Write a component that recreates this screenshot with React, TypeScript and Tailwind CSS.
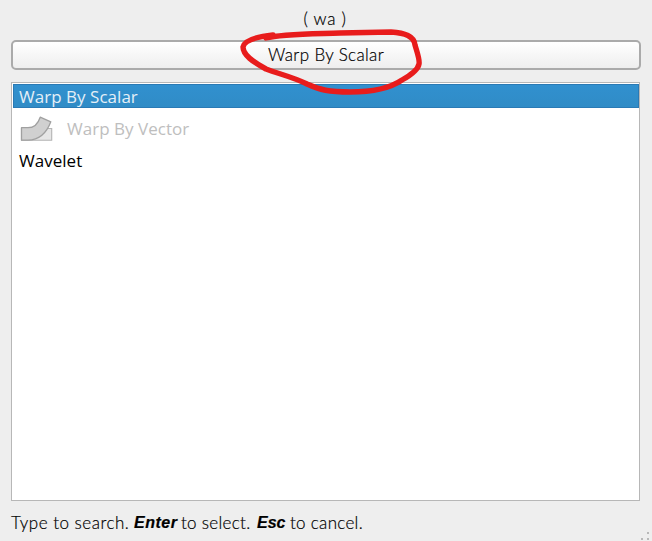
function WarpIcon() {
  return (
    <svg width="34" height="26" viewBox="0 0 34 26" className="block shrink-0">
      <path d="M1.5 13.5H31.7V25.300H1.5Z" fill="#e6e6e6" stroke="#b4b4b4" strokeWidth="1.1" />
      <path d="M1.5 12.7H8C14 12.700 18.300 8 20.200 2.200L30.800 6.800C26.500 18.200 18.500 25 8 25.200H1.500Z" fill="#d0d0d0" stroke="#a0a0a0" strokeWidth="1.3" strokeLinejoin="round" />
    </svg>
  );
}

function Scribble() {
  return (
    <svg width="190" height="75" viewBox="235 25 190 75" className="pointer-events-none absolute left-[235px] top-[25px]">
      <path
        d="M266 38C280 34 310 34 340 33L391 32C405 33 414 36 415 45C417 52 420 60 419 64C418 70 411 75 402 80C389 89 371 92 350 92C329 92 320 90 307 84C293 77 279 74 266 69C253 62 243 55 243 47C244 41 254 37 273 35"
        fill="none" stroke="#e81c1c" strokeWidth="5.400" strokeLinecap="round" strokeLinejoin="round"
      />
    </svg>
  );
}

export default function App() {
  return (
    <div className="relative flex h-[541px] w-[652px] flex-col overflow-hidden bg-[#eeeeee] pl-[11px] font-['Lato',sans-serif] text-[17px] font-light text-black">
      <div className="flex h-10 w-[629px] items-center justify-center whitespace-pre pb-[3px] pr-[1px]">
        <span className="leading-5 tracking-[0.700px] [-webkit-text-stroke:0.2px_black]">( wa )</span>
      </div>
      <button className="flex h-[30px] w-[630px] shrink-0 items-center justify-center rounded-[5px] border-2 border-[#aaaaaa] bg-linear-to-b from-white to-[#eeeeee] pb-px tracking-[0.350px] [-webkit-text-stroke:0.2px_black]">
        Warp By Scalar
      </button>
      <div className="mt-3 flex h-[419px] w-[629px] shrink-0 flex-col border border-[#b7b7b7] bg-white pl-px pt-px font-['Open_Sans',sans-serif] text-[17px] font-normal">
        <div className="flex h-6 shrink-0 items-center border border-[#2a7ab5] bg-linear-to-b from-[#3190cf] to-[#308cc6] pl-[5px] text-[#e5eff7]">
          <span className="pt-0.5 tracking-[0.030px]">Warp By Scalar</span>
        </div>
        <div className="flex h-10 shrink-0 items-center pl-[7px] text-[#bebebe]">
          <WarpIcon />
          <span className="ml-[13px] pt-0.5 tracking-[0.030px]">Warp By Vector</span>
        </div>
        <div className="flex h-6 shrink-0 items-center pl-1.5">
          <span className="pt-0.5 tracking-[0.030px]">Wavelet</span>
        </div>
      </div>
      <div className="flex h-[40px] items-center whitespace-nowrap pt-1 leading-5 [-webkit-text-stroke:0.2px_black]">
        <span className="w-[123px] tracking-[0.500px]">Type to search.</span>
        <span className="w-[47px] font-['Liberation_Sans',sans-serif] text-[16px] font-bold italic tracking-[0.500px]">Enter</span>
        <span className="w-[76px] tracking-[0.300px]">to select.</span>
        <span className="w-[33px] font-['Liberation_Sans',sans-serif] text-[16px] font-bold italic">Esc</span>
        <span className="tracking-[0.300px]">to cancel.</span>
      </div>
      <svg width="12" height="11" viewBox="0 0 12 11" className="absolute bottom-0 right-0" shapeRendering="crispEdges">
        <path d="M7 2h2v2H7zM1 8h2v2H1zM7 8h2v2H7z" fill="#b8b8b8" />
      </svg>
      <Scribble />
    </div>
  );
}
